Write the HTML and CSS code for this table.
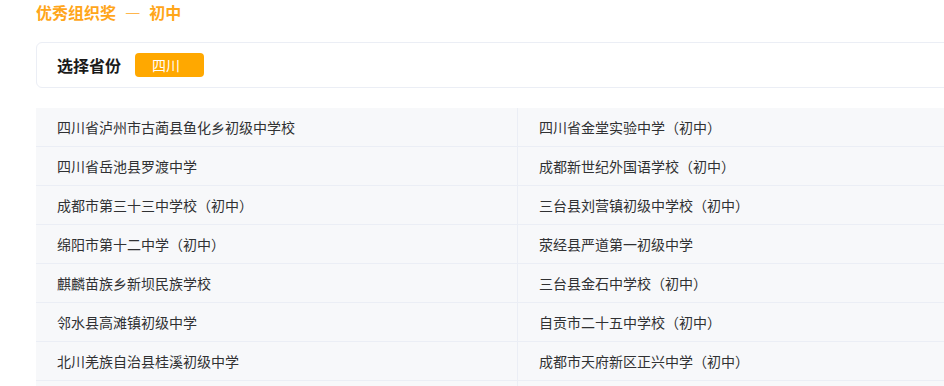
FILE: index.html
```html
<!DOCTYPE html>
<html lang="zh-CN">
<head>
<meta charset="utf-8">
<title>优秀组织奖 — 初中</title>
<link rel="stylesheet" href="styles.css">
</head>
<body>
<div class="page">
  <h1 class="title">优秀组织奖 <span class="dash">—</span> 初中</h1>
  <div class="card">
    <span class="label">选择省份</span>
    <span class="badge">四川</span>
  </div>
  <div class="table">
    <div class="cell">四川省泸州市古蔺县鱼化乡初级中学校</div>
    <div class="cell">四川省金堂实验中学（初中）</div>
    <div class="cell">四川省岳池县罗渡中学</div>
    <div class="cell">成都新世纪外国语学校（初中）</div>
    <div class="cell">成都市第三十三中学校（初中）</div>
    <div class="cell">三台县刘营镇初级中学校（初中）</div>
    <div class="cell">绵阳市第十二中学（初中）</div>
    <div class="cell">荥经县严道第一初级中学</div>
    <div class="cell">麒麟苗族乡新坝民族学校</div>
    <div class="cell">三台县金石中学校（初中）</div>
    <div class="cell">邻水县高滩镇初级中学</div>
    <div class="cell">自贡市二十五中学校（初中）</div>
    <div class="cell">北川羌族自治县桂溪初级中学</div>
    <div class="cell">成都市天府新区正兴中学（初中）</div>
    <div class="cell"></div>
    <div class="cell"></div>
  </div>
</div>
</body>
</html>
```
FILE: styles.css
```css
html, body {
  margin: 0;
  padding: 0;
  background: #ffffff;
  overflow: hidden;
}
body {
  font-family: "Noto Sans CJK SC", "Noto Sans", sans-serif;
  color: #303133;
}
.page {
  padding: 0 0 0 36px;
  width: 964px;
}
.title {
  margin: 0;
  font-size: 16px;
  line-height: 24px;
  font-weight: 700;
  color: #ffa61a;
}
.dash {
  margin: 0 5px;
}
.card {
  margin-top: 18px;
  height: 44px;
  border: 1px solid #ebeef5;
  border-radius: 6px;
  display: flex;
  align-items: center;
  padding-left: 20px;
  gap: 14px;
}
.label {
  font-size: 16px;
  font-weight: 700;
  color: #1a1a1a;
  line-height: 24px;
}
.badge {
  box-sizing: border-box;
  width: 69px;
  height: 24px;
  line-height: 24px;
  padding-left: 17px;
  background: #ffa800;
  color: #ffffff;
  font-size: 14px;
  border-radius: 4px;
}
.table {
  margin-top: 20px;
  display: grid;
  grid-template-columns: 482px 482px;
  background: #f7f8fa;
}
.cell {
  height: 38px;
  line-height: 38px;
  padding-left: 21px;
  font-size: 14px;
  color: #303133;
  border-bottom: 1px solid #ebeef5;
  white-space: nowrap;
}
.cell:nth-child(odd) {
  border-right: 1px solid #ebeef5;
}
```
